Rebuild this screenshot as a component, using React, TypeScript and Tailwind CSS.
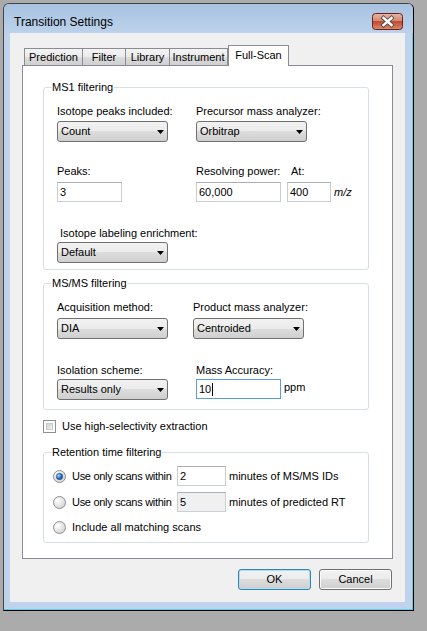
import React from "react";

const txt = "text-[11px] leading-[13px] text-black whitespace-nowrap";

function Combo({ value }: { value: string }) {
  return (
    <div className="w-[111px] h-[21px] flex items-center justify-between rounded-[3px] border border-[#707070] bg-[linear-gradient(#f2f2f2_0%,#ebebeb_50%,#dddddd_50%,#cfcfcf_100%)] pl-[3px] pr-[3px]">
      <span className={txt}>{value}</span>
      <svg width="7" height="4" viewBox="0 0 7 4">
        <path d="M0 0h7L3.5 4z" fill="#000" />
      </svg>
    </div>
  );
}

function TextBox({
  value,
  w,
  focused,
  disabled,
}: {
  value: string;
  w: string;
  focused?: boolean;
  disabled?: boolean;
}) {
  let cls = "border-[#c9cdd4] border-t-[#abadb3] bg-white";
  if (focused) cls = "border-[#569de5] bg-white";
  if (disabled) cls = "border-[#c9cdd4] border-t-[#adb2b5] bg-[#f0f0f0]";
  return (
    <div className={`${w} h-[20px] border ${cls} flex items-center pl-[2px] shrink-0`}>
      <span className={`${txt} ${disabled ? "text-[#6d6d6d]" : ""}`}>{value}</span>
      {focused && <span className="w-[1px] h-[13px] bg-black ml-[1px]" />}
    </div>
  );
}

function Group({
  title,
  className,
  children,
}: {
  title: string;
  className: string;
  children: React.ReactNode;
}) {
  return (
    <div className={`relative ml-[20px] w-[326px] rounded-[3px] border border-[#d5dfe5] ${className}`}>
      <span className={`absolute left-[7px] -top-[7px] bg-white px-[1px] ${txt}`}>{title}</span>
      {children}
    </div>
  );
}

function Radio({ checked }: { checked?: boolean }) {
  return (
    <svg width="13" height="13" viewBox="0 0 13 13" className="shrink-0">
      <defs>
        <radialGradient id={checked ? "rgc" : "rgu"} cx="0.35" cy="0.35" r="0.7">
          <stop offset="0" stopColor="#ffffff" />
          <stop offset="1" stopColor="#d3d3d3" />
        </radialGradient>
        <radialGradient id="rdot" cx="0.35" cy="0.35" r="0.7">
          <stop offset="0" stopColor="#a9d8fb" />
          <stop offset="0.6" stopColor="#2d73c4" />
          <stop offset="1" stopColor="#1b4a8c" />
        </radialGradient>
      </defs>
      <circle cx="6.5" cy="6.5" r="6" fill={checked ? "url(#rgc)" : "url(#rgu)"} stroke="#8e8f8f" />
      {checked && <circle cx="6.5" cy="6.5" r="3.2" fill="url(#rdot)" stroke="#1d4f91" strokeWidth="0.6" />}
    </svg>
  );
}

function RadioRow({
  checked,
  children,
  className,
}: {
  checked?: boolean;
  children: React.ReactNode;
  className?: string;
}) {
  return (
    <div className={`flex items-center h-[20px] ${className ?? ""}`}>
      <Radio checked={checked} />
      <div className="ml-[6px] flex items-center">{children}</div>
    </div>
  );
}

function Tab({ label, w }: { label: string; w: string }) {
  return (
    <div
      className={`${w} h-[17px] mb-[1px] -mr-[1px] flex items-center justify-center border border-b-0 border-[#898c95] bg-[linear-gradient(#f3f3f3_0%,#ebebeb_50%,#dddddd_50%,#cfcfcf_100%)] ${txt}`}
    >
      {label}
    </div>
  );
}

function Button({ label, primary }: { label: string; primary?: boolean }) {
  return (
    <div
      className={`w-[73px] h-[21px] flex items-center justify-center rounded-[3px] border bg-[linear-gradient(#f2f2f2_0%,#ebebeb_50%,#dddddd_50%,#cfcfcf_100%)] ${
        primary
          ? "border-[#3c7fb1] shadow-[inset_0_0_0_1px_#a6e1f7]"
          : "border-[#707070] shadow-[inset_0_0_0_1px_#fbfbfb]"
      } ${txt}`}
    >
      {label}
    </div>
  );
}

export default function App() {
  return (
    <div className="w-[427px] h-[631px] bg-[#ababab] pt-[3px] pl-[3px] font-['Liberation_Sans',Arial,sans-serif] overflow-hidden">
      <div className="w-[411px] h-[608px] rounded-t-[6px] border border-[#444] border-r-black border-b-black bg-[#bfd4ec] shadow-[inset_-1px_-1px_0_#5bcbe6] flex flex-col">
        {/* title bar */}
        <div className="h-[29px] flex items-start justify-between rounded-t-[5px] bg-[linear-gradient(#a7c2e0,#bcd2eb)]">
          <span className="pl-[10px] pt-[11px] text-[12px] leading-[15px] text-black">Transition Settings</span>
          <svg width="31" height="17" viewBox="0 0 31 17" className="mt-[9px] mr-[10px]">
            <defs>
              <linearGradient id="closeg" x1="0" y1="0" x2="0" y2="1">
                <stop offset="0" stopColor="#e9b3a6" />
                <stop offset="0.45" stopColor="#d58a75" />
                <stop offset="0.5" stopColor="#c24a2f" />
                <stop offset="1" stopColor="#d98a72" />
              </linearGradient>
            </defs>
            <rect x="0.5" y="0.5" width="30" height="16" rx="3" fill="url(#closeg)" stroke="#6b2217" />
            <path d="M11.5 5 L19.5 12 M19.5 5 L11.5 12" stroke="#4a4a4a" strokeWidth="4.2" strokeLinecap="square" />
            <path d="M11.5 5 L19.5 12 M19.5 5 L11.5 12" stroke="#ffffff" strokeWidth="2.4" strokeLinecap="square" />
          </svg>
        </div>

        {/* client area */}
        <div className="ml-[6px] w-[395px] h-[569px] bg-[#f0f0f0] flex flex-col">
          <div className="relative z-10 mt-[12px] ml-[14px] h-[21px] flex items-end">
            <Tab label="Prediction" w="w-[59px]" />
            <Tab label="Filter" w="w-[44px]" />
            <Tab label="Library" w="w-[45px]" />
            <Tab label="Instrument" w="w-[59px]" />
            <div className={`w-[61px] h-[21px] ml-[1px] flex items-start justify-center pt-[3px] border border-b-0 border-[#898c95] bg-white ${txt}`}>
              Full-Scan
            </div>
          </div>

          <div className="-mt-[1px] ml-[12px] w-[371px] h-[494px] border border-[#898c95] bg-white flex flex-col">
            {/* MS1 filtering */}
            <Group title="MS1 filtering" className="mt-[21px] pl-[13px] pt-[17px] pb-[6px]">
              <div className="flex">
                <div className="w-[139px] flex flex-col">
                  <span className={txt}>Isotope peaks included:</span>
                  <div className="mt-[3px]">
                    <Combo value="Count" />
                  </div>
                </div>
                <div className="flex flex-col">
                  <span className={txt}>Precursor mass analyzer:</span>
                  <div className="mt-[3px]">
                    <Combo value="Orbitrap" />
                  </div>
                </div>
              </div>
              <div className="flex mt-[23px]">
                <div className="w-[139px] flex flex-col">
                  <span className={txt}>Peaks:</span>
                  <div className="mt-[4px]">
                    <TextBox value="3" w="w-[65px]" />
                  </div>
                </div>
                <div className="flex flex-col">
                  <div className="flex">
                    <span className={`w-[95px] ${txt}`}>Resolving power:</span>
                    <span className={txt}>At:</span>
                  </div>
                  <div className="mt-[4px] flex items-center">
                    <TextBox value="60,000" w="w-[85px]" />
                    <div className="ml-[6px]">
                      <TextBox value="400" w="w-[44px]" />
                    </div>
                    <span className={`ml-[3px] italic ${txt}`}>m/z</span>
                  </div>
                </div>
              </div>
              <div className="mt-[25px] flex flex-col">
                <span className={`pl-[3px] ${txt}`}>Isotope labeling enrichment:</span>
                <div className="mt-[2px]">
                  <Combo value="Default" />
                </div>
              </div>
            </Group>

            {/* MS/MS filtering */}
            <Group title="MS/MS filtering" className="mt-[13px] pl-[13px] pt-[17px] pb-[9px]">
              <div className="flex">
                <div className="w-[136px] flex flex-col">
                  <span className={txt}>Acquisition method:</span>
                  <div className="mt-[4px]">
                    <Combo value="DIA" />
                  </div>
                </div>
                <div className="flex flex-col">
                  <span className={txt}>Product mass analyzer:</span>
                  <div className="mt-[4px]">
                    <Combo value="Centroided" />
                  </div>
                </div>
              </div>
              <div className="flex mt-[25px]">
                <div className="w-[139px] flex flex-col">
                  <span className={txt}>Isolation scheme:</span>
                  <div className="mt-[2px]">
                    <Combo value="Results only" />
                  </div>
                </div>
                <div className="flex flex-col">
                  <span className={txt}>Mass Accuracy:</span>
                  <div className="mt-[2px] flex items-start">
                    <TextBox value="10" w="w-[85px]" focused />
                    <span className={`ml-[3px] mt-[2px] ${txt}`}>ppm</span>
                  </div>
                </div>
              </div>
            </Group>

            {/* checkbox */}
            <div className="mt-[10px] ml-[20px] flex items-center h-[13px]">
              <div className="w-[13px] h-[13px] border border-[#8e8f8f] bg-white p-[2px]">
                <div className="w-full h-full border border-[#c6cbd2] bg-[linear-gradient(135deg,#cbcfd5,#f4f4f4)]" />
              </div>
              <span className={`ml-[6px] ${txt}`}>Use high-selectivity extraction</span>
            </div>

            {/* Retention time filtering */}
            <Group title="Retention time filtering" className="mt-[19px] pl-[9px] pt-[13px] pb-[5px]">
              <RadioRow checked>
                <span className={`w-[105px] tracking-[-0.3px] ${txt}`}>Use only scans within</span>
                <TextBox value="2" w="w-[49px]" />
                <span className={`ml-[3px] ${txt}`}>minutes of MS/MS IDs</span>
              </RadioRow>
              <RadioRow className="mt-[6px]">
                <span className={`w-[105px] tracking-[-0.3px] ${txt}`}>Use only scans within</span>
                <TextBox value="5" w="w-[49px]" disabled />
                <span className={`ml-[3px] ${txt}`}>minutes of predicted RT</span>
              </RadioRow>
              <RadioRow className="mt-[5px]">
                <span className={txt}>Include all matching scans</span>
              </RadioRow>
            </Group>
          </div>

          <div className="mt-[10px] pr-[13px] flex justify-end gap-[8px]">
            <Button label="OK" primary />
            <Button label="Cancel" />
          </div>
        </div>
      </div>
    </div>
  );
}
